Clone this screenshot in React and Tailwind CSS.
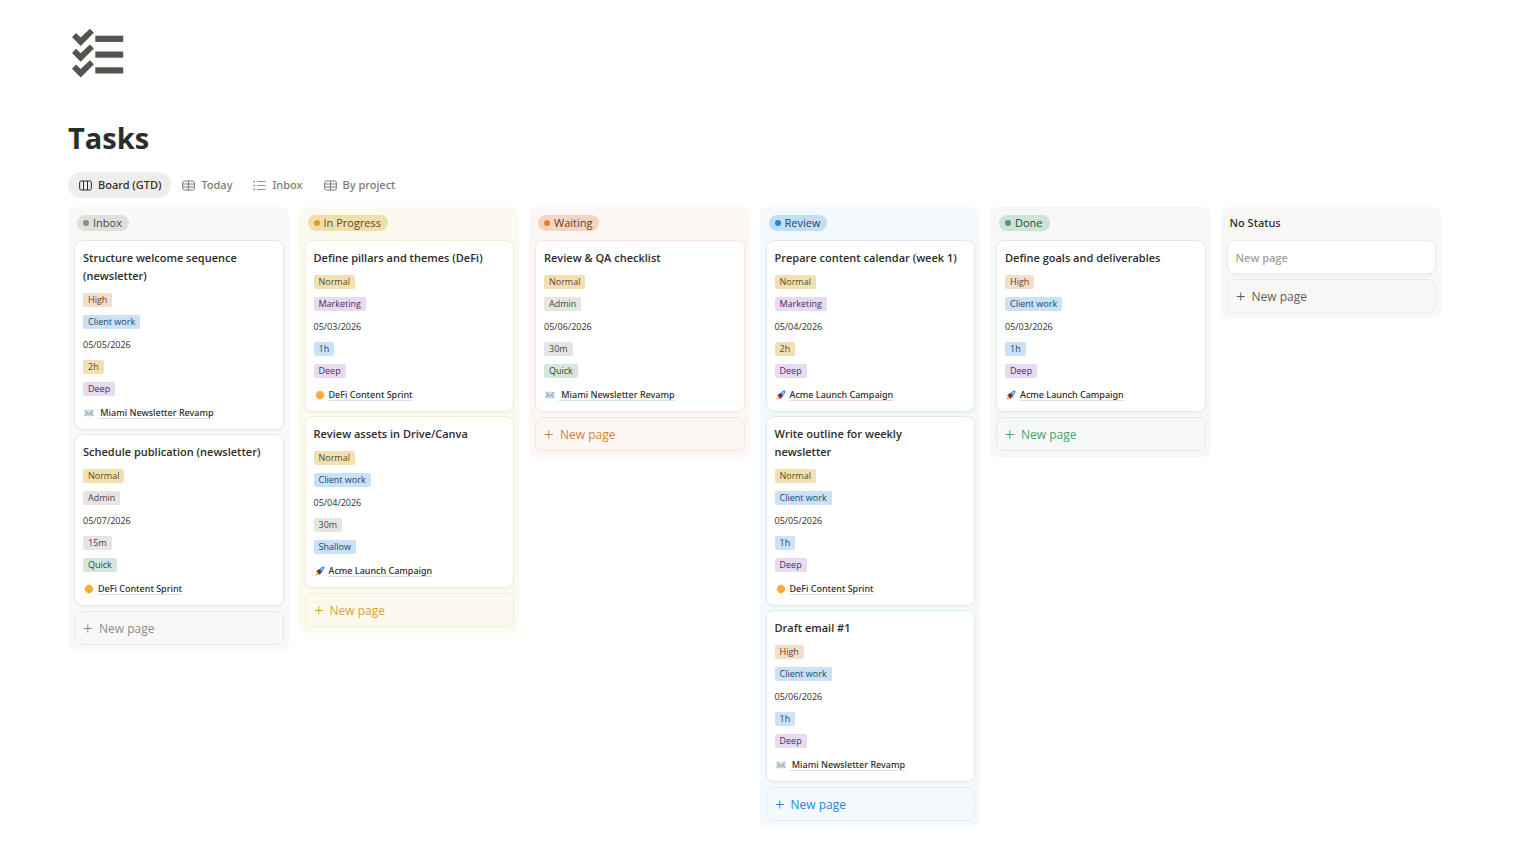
import clsx from 'clsx'

const tagStyles = {
  gray: 'bg-[#e6e5e3] text-[#494846]',
  orange: 'bg-[#f3decc] text-[#6a3b1c]',
  yellow: 'bg-[#f1e1b2] text-[#5e4a1c]',
  green: 'bg-[#d5e7dd] text-[#1f4a36]',
  blue: 'bg-[#c9e2f7] text-[#1b4468]',
  purple: 'bg-[#e8daf1] text-[#4a2c60]',
}

const tagColors = {
  High: 'orange',
  Normal: 'yellow',
  'Client work': 'blue',
  Marketing: 'purple',
  Admin: 'gray',
  '15m': 'gray',
  '30m': 'gray',
  '1h': 'blue',
  '2h': 'yellow',
  Deep: 'purple',
  Shallow: 'blue',
  Quick: 'green',
}

const themes = {
  gray: {
    column: 'bg-[#f9f8f7]',
    pill: 'bg-[#e0dfdc] text-[#494846]',
    dot: 'bg-[#8e8b86]',
    border: 'border-[#e9e8e6]',
    button: 'text-[#8e8b86]',
  },
  yellow: {
    column: 'bg-[#fcfaee]',
    pill: 'bg-[#f0deab] text-[#5e4a1c]',
    dot: 'bg-[#d9a32f]',
    border: 'border-[#f4edd2]',
    button: 'text-[#d9a32f]',
  },
  orange: {
    column: 'bg-[#fcf6f4]',
    pill: 'bg-[#f2d6c1] text-[#6a3b1c]',
    dot: 'bg-[#d9803c]',
    border: 'border-[#f9e5d9]',
    button: 'text-[#d5803b]',
  },
  blue: {
    column: 'bg-[#f3f9fd]',
    pill: 'bg-[#c1def5] text-[#1b4468]',
    dot: 'bg-[#2783de]',
    border: 'border-[#dcebf5]',
    button: 'text-[#2783de]',
  },
  green: {
    column: 'bg-[#f5f8f7]',
    pill: 'bg-[#cfe2d7] text-[#1f4a36]',
    dot: 'bg-[#46a171]',
    border: 'border-[#e1ebe7]',
    button: 'text-[#46a171]',
  },
  none: {
    column: 'bg-[#f9f8f7]',
    border: 'border-[#ecebe9]',
    button: 'text-[#5f5c57]',
  },
}

const projects = {
  newsletter: { name: '\u00a0Miami Newsletter Revamp', icon: EnvelopeIcon },
  defi: { name: 'DeFi Content Sprint', icon: CoinIcon },
  acme: { name: 'Acme Launch Campaign', icon: RocketIcon },
}

const columns = [
  {
    name: 'Inbox',
    theme: 'gray',
    tasks: [
      { title: 'Structure welcome sequence (newsletter)', priority: 'High', area: 'Client work', date: '05/05/2026', time: '2h', energy: 'Deep', project: 'newsletter' },
      { title: 'Schedule publication (newsletter)', priority: 'Normal', area: 'Admin', date: '05/07/2026', time: '15m', energy: 'Quick', project: 'defi' },
    ],
  },
  {
    name: 'In Progress',
    theme: 'yellow',
    tasks: [
      { title: 'Define pillars and themes (DeFi)', priority: 'Normal', area: 'Marketing', date: '05/03/2026', time: '1h', energy: 'Deep', project: 'defi' },
      { title: 'Review assets in Drive/Canva', priority: 'Normal', area: 'Client work', date: '05/04/2026', time: '30m', energy: 'Shallow', project: 'acme' },
    ],
  },
  {
    name: 'Waiting',
    theme: 'orange',
    tasks: [
      { title: 'Review & QA checklist', priority: 'Normal', area: 'Admin', date: '05/06/2026', time: '30m', energy: 'Quick', project: 'newsletter' },
    ],
  },
  {
    name: 'Review',
    theme: 'blue',
    tasks: [
      { title: 'Prepare content calendar (week 1)', priority: 'Normal', area: 'Marketing', date: '05/04/2026', time: '2h', energy: 'Deep', project: 'acme' },
      { title: 'Write outline for weekly newsletter', priority: 'Normal', area: 'Client work', date: '05/05/2026', time: '1h', energy: 'Deep', project: 'defi' },
      { title: 'Draft email #1', priority: 'High', area: 'Client work', date: '05/06/2026', time: '1h', energy: 'Deep', project: 'newsletter' },
    ],
  },
  {
    name: 'Done',
    theme: 'green',
    tasks: [
      { title: 'Define goals and deliverables', priority: 'High', area: 'Client work', date: '05/03/2026', time: '1h', energy: 'Deep', project: 'acme' },
    ],
  },
  { name: 'No Status', theme: 'none', tasks: [] },
]

const tabs = [
  { label: 'Board (GTD)', icon: BoardIcon, active: true },
  { label: 'Today', icon: TableIcon },
  { label: 'Inbox', icon: ListIcon },
  { label: 'By project', icon: TableIcon },
]

function ChecklistIcon() {
  return (
    <svg viewBox="0 0 60 60" className="w-[60px] h-[60px]" fill="#55534e" aria-hidden="true">
      {[0, 15.8, 31.6].map((y) => (
        <g key={y} transform={`translate(0 ${y})`}>
          <path d="M4 13.1 8.1 9l4.5 4.5L21.9 4.7l4 4-13.2 13.2z" />
          <path d="M27.3 11.7h27.9v6.2H27.3z" />
        </g>
      ))}
    </svg>
  )
}

function BoardIcon() {
  return (
    <svg viewBox="0 0 13 13" className="w-[13px] h-[13px] shrink-0" fill="none" stroke="currentColor" aria-hidden="true">
      <rect x="0.6" y="2" width="11.8" height="9" rx="1.8" />
      <path d="M4.5 2v9M8.5 2v9" />
    </svg>
  )
}

function TableIcon() {
  return (
    <svg viewBox="0 0 13 13" className="w-[13px] h-[13px] shrink-0" fill="none" stroke="currentColor" aria-hidden="true">
      <rect x="0.6" y="2" width="11.8" height="9" rx="1.8" />
      <path d="M0.6 5h11.8M0.6 8h11.8M6.5 2v9" />
    </svg>
  )
}

function ListIcon() {
  return (
    <svg viewBox="0 0 13 13" className="w-[13px] h-[13px] shrink-0" fill="none" stroke="currentColor" aria-hidden="true">
      <path d="M4 2.5h8.5M4 6.5h8.5M4 10.5h8.5" strokeWidth="0.8" />
      <path d="M0.5 2.5h1.5M0.5 6.5h1.5M0.5 10.5h1.5" strokeWidth="1.3" />
    </svg>
  )
}

function PlusIcon() {
  return (
    <svg viewBox="0 0 10 10" className="w-[10px] h-[10px] shrink-0" fill="none" stroke="currentColor" aria-hidden="true">
      <path d="M0.8 4.5h8M4.8 0.5v8" />
    </svg>
  )
}

function EnvelopeIcon() {
  return (
    <svg viewBox="0 0 10 10" className="w-[10px] h-[10px] shrink-0" aria-hidden="true">
      <rect x="0.5" y="1.7" width="9" height="6.6" rx="0.4" fill="#ccd8e0" />
      <path d="M0.9 2.2l4.1 4 4.1-4M1 7.9l2.4-3M9 7.9l-2.4-3" fill="none" stroke="#8496a4" strokeWidth="0.8" />
      <path d="M3.6 3.2L5 4.6l1.4-1.4z" fill="#f3f7fa" />
    </svg>
  )
}

function CoinIcon() {
  return (
    <svg viewBox="0 0 10 10" className="w-[10px] h-[10px] shrink-0" aria-hidden="true">
      <path d="M3.4 0.8h3.2l1.2 1.1 0.9 1.4 0.7 1.7-0.7 1.7-0.9 1.4-1.3 1.1H3.5L2.2 8.1 1.3 6.7 0.6 5l0.7-1.7 0.9-1.4z" fill="#ffb03a" />
      <path d="M3 3.7h4M1.2 5.6h7.6M3.2 7.3h3.6" stroke="#f0962a" strokeWidth="0.7" />
      <path d="M3.4 2.1h3.2M2.6 4.6h4.8" stroke="#ffc95a" strokeWidth="0.7" />
    </svg>
  )
}

function RocketIcon() {
  return (
    <svg viewBox="0 0 10 10" className="w-[10px] h-[10px] shrink-0" aria-hidden="true">
      <path d="M0.5 9.6C0.7 7.8 1.5 6.8 2.6 6.6l0.9 0.9C3.2 8.6 2.2 9.4 0.5 9.6z" fill="#ffac33" />
      <path d="M1.2 5.8L3.6 3.2h2L3 6.6zM4 8.9l2.8-2.5v-2L3.4 7.2z" fill="#a0041e" />
      <path d="M9.6 0.4C6.8 0.4 4.6 2.2 2.6 5.8L4.3 7.4C7.8 5.4 9.6 3.2 9.6 0.4z" fill="#3b88c3" />
      <path d="M2.6 6.2l1.3 1.3L6.2 5.6 4.4 3.8z" fill="#1e3f66" />
      <circle cx="7" cy="3" r="0.9" fill="#bfe0f7" />
    </svg>
  )
}

function Tag({ children }) {
  return (
    <div className="flex h-[22px] items-center">
      <span className={clsx('h-[14px] rounded-[2px] px-[5px] text-[9px] leading-[14px]', tagStyles[tagColors[children]])}>
        {children}
      </span>
    </div>
  )
}

function TaskCard({ task, border }) {
  const { name, icon: Icon } = projects[task.project]
  return (
    <article className={clsx('rounded-lg border bg-white px-2 pt-2 pb-1 shadow-[0_1px_3px_rgba(0,0,0,0.04)]', border)}>
      <h3 className="mb-1 pr-[6px] text-[11px] leading-[18px] font-semibold text-[#2c2c2b]">{task.title}</h3>
      <Tag>{task.priority}</Tag>
      <Tag>{task.area}</Tag>
      <p className="text-[9px] leading-[23px] text-[#2c2c2b]">{task.date}</p>
      <Tag>{task.time}</Tag>
      <Tag>{task.energy}</Tag>
      <a
        href="#"
        className="flex h-[25px] items-center gap-1 pl-px font-['Noto_Sans',sans-serif] text-[9px] font-medium text-[#2c2c2b]"
      >
        <Icon />
        <span className="underline decoration-[#dddcda] decoration-1 underline-offset-2 [text-decoration-skip-ink:none]">{name}</span>
      </a>
    </article>
  )
}

function Column({ column }) {
  const theme = themes[column.theme]
  return (
    <section className={clsx('min-w-0 rounded-lg pt-2 pr-[5px] pb-[6px] pl-[6px]', theme.column)}>
      <div className="mb-[9px] flex h-4 items-center px-[3px]">
        {theme.pill ? (
          <h2 className={clsx('flex h-4 items-center gap-1 rounded-full pr-[7px] pl-[6px] text-[11px] leading-4', theme.pill)}>
            <span className={clsx('h-[6px] w-[6px] rounded-full', theme.dot)} />
            {column.name}
          </h2>
        ) : (
          <h2 className="font-['Noto_Sans',sans-serif] text-[11px] leading-4 font-medium text-[#2c2c2b]">{column.name}</h2>
        )}
      </div>
      <div className="flex flex-col gap-1">
        {column.tasks.map((task) => (
          <TaskCard key={task.title} task={task} border={theme.border} />
        ))}
        {column.tasks.length === 0 && (
          <input
            type="text"
            placeholder="New page"
            aria-label="New page"
            className={clsx('h-[34px] w-full rounded-lg border bg-white px-2 text-[11px] font-semibold text-[#2c2c2b] shadow-[0_1px_3px_rgba(0,0,0,0.04)] placeholder:text-[#a5a29d]', theme.border)}
          />
        )}
        <button
          type="button"
          className={clsx('mt-px flex h-[34px] w-full items-center gap-[6px] rounded-lg border px-2 pt-px text-xs', theme.border, theme.button)}
        >
          <PlusIcon />
          New page
        </button>
      </div>
    </section>
  )
}

export default function App() {
  return (
    <main className="min-h-screen bg-white pt-6 pr-[81px] pb-7 pl-[68px] font-['Open_Sans','Noto_Sans',sans-serif]">
      <ChecklistIcon />
      <h1 className="mt-[34px] text-[29px] leading-[40px] font-bold text-[#2c2c2b]">Tasks</h1>

      {/* Views */}
      <nav className="mt-[14px] mb-[9px] flex font-['Noto_Sans',sans-serif]">
        {tabs.map(({ label, icon: Icon, active }) => (
          <button
            key={label}
            type="button"
            className={clsx(
              'flex h-[26px] items-center gap-[6px] rounded-full pr-[10px] pl-[11px] text-[11px] font-medium',
              active ? 'bg-[#efeeec] text-[#2c2c2b]' : 'text-[#7d7a75]'
            )}
          >
            <Icon />
            {label}
          </button>
        ))}
      </nav>

      {/* Board */}
      <div className="grid grid-cols-6 items-start gap-[10px]">
        {columns.map((column) => (
          <Column key={column.name} column={column} />
        ))}
      </div>
    </main>
  )
}
